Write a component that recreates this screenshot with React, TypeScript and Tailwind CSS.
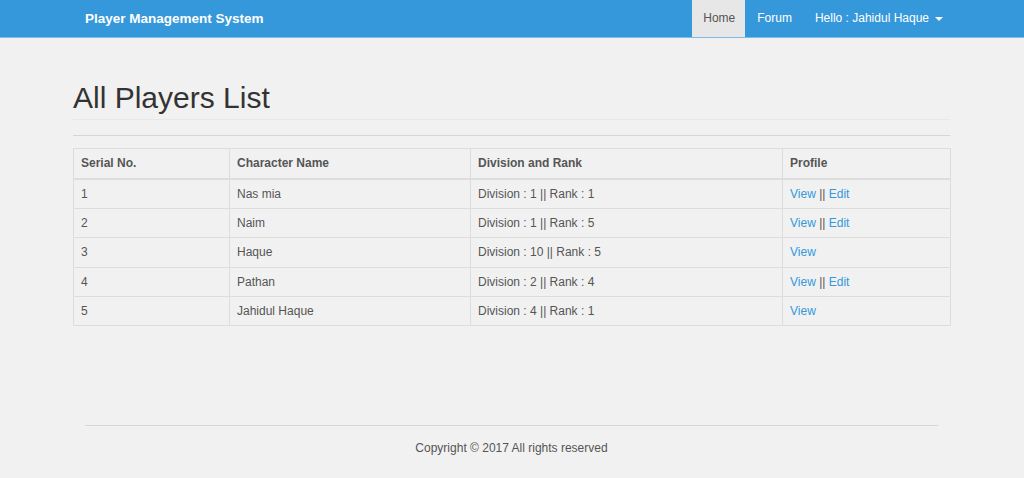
const players = [
    { id: 1, name: "Nas mia", division: 1, rank: 1, edit: true },
    { id: 2, name: "Naim", division: 1, rank: 5, edit: true },
    { id: 3, name: "Haque", division: 10, rank: 5, edit: false },
    { id: 4, name: "Pathan", division: 2, rank: 4, edit: true },
    { id: 5, name: "Jahidul Haque", division: 4, rank: 1, edit: false },
];

const App = () => {
    return (
        <div className="min-h-[478px] bg-[#f1f1f1] text-[#555] text-[12px]" style={{ fontFamily: '"Liberation Sans", Arial, sans-serif' }}>
            <nav className="bg-[#3498db] border-b border-[#7fbbe6]">
                <div className="w-[878px] mx-auto flex items-center h-[37px] pr-[1px]">
                    <a href="#" className="px-[12px] text-white font-bold text-[13.5px] leading-[37px]">
                        Player Management System
                    </a>
                    <ul className="ml-auto flex h-full">
                        <li>
                            <a href="#" className="block pl-[11px] pr-[10px] leading-[37px] bg-[#e7e7e7] text-[#555]">Home</a>
                        </li>
                        <li>
                            <a href="#" className="block px-[12px] leading-[37px] text-white">Forum</a>
                        </li>
                        <li>
                            <a href="#" className="flex items-center pl-[11px] pr-[7px] leading-[37px] text-white">
                                Hello : Jahidul Haque
                                <span className="ml-[6px] inline-block w-0 h-0 border-l-[4px] border-r-[4px] border-t-[4px] border-l-transparent border-r-transparent border-t-white"></span>
                            </a>
                        </li>
                    </ul>
                </div>
            </nav>

            <div className="w-[878px] mx-auto pr-[1px]">
                <div className="mt-[43px] pb-[5px] border-b border-[#e8e8e8]">
                    <h1 className="text-[30px] leading-[33px] text-[#333]">All Players List</h1>
                </div>
                <hr className="mt-[15px] border-t border-[#d6d6d6]" />

                <table className="mt-[12px] w-full border-collapse border border-[#ddd] table-fixed">
                    <colgroup>
                        <col className="w-[156px]" />
                        <col className="w-[241px]" />
                        <col className="w-[312px]" />
                        <col className="w-[168px]" />
                    </colgroup>
                    <thead>
                        <tr>
                            <th className="text-left font-bold px-[7px] py-[7px] leading-[15px] border border-[#ddd] border-b-2">Serial No.</th>
                            <th className="text-left font-bold px-[7px] py-[7px] leading-[15px] border border-[#ddd] border-b-2">Character Name</th>
                            <th className="text-left font-bold px-[7px] py-[7px] leading-[15px] border border-[#ddd] border-b-2">Division and Rank</th>
                            <th className="text-left font-bold px-[7px] py-[7px] leading-[15px] border border-[#ddd] border-b-2">Profile</th>
                        </tr>
                    </thead>
                    <tbody>
                        {players.map((p) => (
                            <tr key={p.id}>
                                <td className="px-[7px] py-[7px] leading-[14.2px] border border-[#ddd]">{p.id}</td>
                                <td className="px-[7px] py-[7px] leading-[14.2px] border border-[#ddd]">{p.name}</td>
                                <td className="px-[7px] py-[7px] leading-[14.2px] border border-[#ddd]">
                                    Division : {p.division} || Rank : {p.rank}
                                </td>
                                <td className="px-[7px] py-[7px] leading-[14.2px] border border-[#ddd]">
                                    <a href="#" className="text-[#3498db]">View</a>
                                    {p.edit && (
                                        <>
                                            {" || "}
                                            <a href="#" className="text-[#3498db]">Edit</a>
                                        </>
                                    )}
                                </td>
                            </tr>
                        ))}
                    </tbody>
                </table>
            </div>

            <footer className="w-[878px] mx-auto pl-[12px] pr-[13px] mt-[99px]">
                <hr className="border-t border-[#d6d6d6]" />
                <p className="text-center leading-[14px] pt-[15px]">Copyright © 2017 All rights reserved</p>
            </footer>
        </div>
    );
};

export default App;
